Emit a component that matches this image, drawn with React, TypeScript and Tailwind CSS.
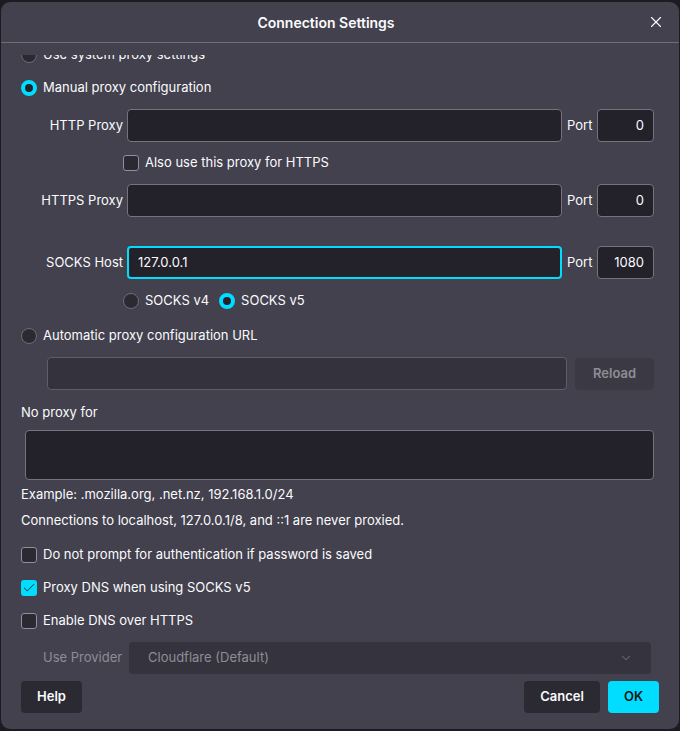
import React from 'react';
import { X, ChevronDown, Check } from 'lucide-react';

const Radio = ({ checked }: { checked?: boolean }) =>
  checked ? (
    <span className="box-border block h-4 w-4 shrink-0 rounded-full border-[4px] border-[#00ddff] bg-[#23222b]" />
  ) : (
    <span className="box-border block h-4 w-4 shrink-0 rounded-full border border-[#6e6d76] bg-[#2b2a33]" />
  );

const Checkbox = ({ checked }: { checked?: boolean }) =>
  checked ? (
    <span className="flex h-4 w-4 shrink-0 items-center justify-center rounded-[3px] bg-[#00ddff]">
      <Check size={14} strokeWidth={1.5} className="text-[#15141a]" />
    </span>
  ) : (
    <span className="box-border block h-4 w-4 shrink-0 rounded-[3px] border border-[#8f8f9d] bg-[#2b2a33]" />
  );

type ProxyRowProps = {
  label: string;
  value?: string;
  port: string;
  focused?: boolean;
};

const ProxyRow = ({ label, value, port, focused }: ProxyRowProps) => (
  <div className="flex h-[33px] items-center">
    <span className="w-[106px] pr-[4px] text-right">{label}</span>
    <div
      className={`box-border flex h-[33px] w-[435px] items-center rounded-[4px] bg-[#23222b] pl-[9px] ${
        focused ? 'border-2 border-[#00ddff]' : 'border border-[#75747c]'
      }`}
    >
      {value}
    </div>
    <span className="ml-[5px] w-[25px]">Port</span>
    <div className="ml-[5px] box-border flex h-[33px] w-[57px] items-center justify-end rounded-[4px] border border-[#75747c] bg-[#23222b] pr-[9px]">
      {port}
    </div>
  </div>
);

const App = () => {
  return (
    <div
      className="h-[731px] w-[680px] bg-[#1c1b22] px-[1px] pb-[2px] pt-[2px] text-[13px] text-[#fbfbfe]"
      style={{ fontFamily: 'Inter, "Noto Sans", sans-serif' }}
    >
      <div className="flex h-full flex-col overflow-hidden rounded-[9px] bg-[#42414d]">
        {/* Header */}
        <div className="relative flex h-[41px] shrink-0 items-center justify-center border-b border-[#6f6e77] pr-[28px]">
          <span className="text-[14px] font-semibold">Connection Settings</span>
          <X size={18} strokeWidth={1.5} className="absolute right-[14px] top-[11px] text-[#fbfbfe]" />
        </div>

        {/* Scrolled content */}
        <div className="mt-[12px] flex-1 overflow-hidden pl-[20px] pr-[25px]">
          <div className="-mt-[10px] flex flex-col">
            <div className="flex h-5 items-center gap-[6px]">
              <Radio />
              <span>Use system proxy settings</span>
            </div>
            <div className="mt-[13px] flex h-5 items-center gap-[6px]">
              <Radio checked />
              <span>Manual proxy configuration</span>
            </div>

            <div className="mt-[11px]">
              <ProxyRow label="HTTP Proxy" port="0" />
            </div>
            <div className="mt-[11px] flex h-5 items-center gap-[6px] pl-[102px]">
              <Checkbox />
              <span>Also use this proxy for HTTPS</span>
            </div>
            <div className="mt-[11px]">
              <ProxyRow label="HTTPS Proxy" port="0" />
            </div>
            <div className="mt-[29px]">
              <ProxyRow label="SOCKS Host" value="127.0.0.1" port="1080" focused />
            </div>
            <div className="mt-[12px] flex h-5 items-center pl-[102px]">
              <Radio />
              <span className="ml-[6px]">SOCKS v4</span>
              <span className="ml-[10px]">
                <Radio checked />
              </span>
              <span className="ml-[6px]">SOCKS v5</span>
            </div>

            <div className="mt-[15px] flex h-5 items-center gap-[6px]">
              <Radio />
              <span>Automatic proxy configuration URL</span>
            </div>
            <div className="mt-[11px] flex items-center pl-[26px]">
              <div className="box-border h-[33px] w-[521px] rounded-[4px] border border-[#5f5e67] bg-[#34333d]" />
              <div className="ml-[8px] flex h-[32px] w-[79px] items-center justify-center rounded-[4px] bg-[#3b3a44] font-semibold text-[#8e8d95]">
                Reload
              </div>
            </div>

            <div className="mt-[13px] flex h-5 items-center">No proxy for</div>
            <div className="ml-[4px] mt-[7px] box-border h-[50px] rounded-[4px] border border-[#75747c] bg-[#23222b]" />
            <div className="mt-[5px] flex h-5 items-center">Example: .mozilla.org, .net.nz, 192.168.1.0/24</div>
            <div className="mt-[6px] flex h-5 items-center">
              Connections to localhost, 127.0.0.1/8, and ::1 are never proxied.
            </div>

            <div className="mt-[14px] flex h-5 items-center gap-[6px]">
              <Checkbox />
              <span>Do not prompt for authentication if password is saved</span>
            </div>
            <div className="mt-[13px] flex h-5 items-center gap-[6px]">
              <Checkbox checked />
              <span>Proxy DNS when using SOCKS v5</span>
            </div>
            <div className="mt-[13px] flex h-5 items-center gap-[6px]">
              <Checkbox />
              <span>Enable DNS over HTTPS</span>
            </div>
            <div className="mt-[11px] flex items-center pl-[22px] pr-[3px]">
              <span className="w-[86px] text-[#8e8d95]">Use Provider</span>
              <div className="flex h-[32px] flex-1 items-center justify-between rounded-[4px] bg-[#35343e] pl-[19px] pr-[18px] text-[#8e8d95]">
                <span>Cloudflare (Default)</span>
                <ChevronDown size={14} strokeWidth={1.25} className="text-[#8e8d95]" />
              </div>
            </div>
          </div>
        </div>

        {/* Footer */}
        <div className="flex shrink-0 items-center justify-between pb-[16px] pl-[20px] pr-[20px] pt-[4px] font-semibold">
          <div className="flex h-[32px] w-[61px] items-center justify-center rounded-[4px] bg-[#2b2a33]">Help</div>
          <div className="flex gap-[8px]">
            <div className="flex h-[32px] w-[76px] items-center justify-center rounded-[4px] bg-[#2b2a33]">Cancel</div>
            <div className="flex h-[32px] w-[51px] items-center justify-center rounded-[4px] bg-[#00ddff] text-[#15141a]">
              OK
            </div>
          </div>
        </div>
      </div>
    </div>
  );
};

export default App;
